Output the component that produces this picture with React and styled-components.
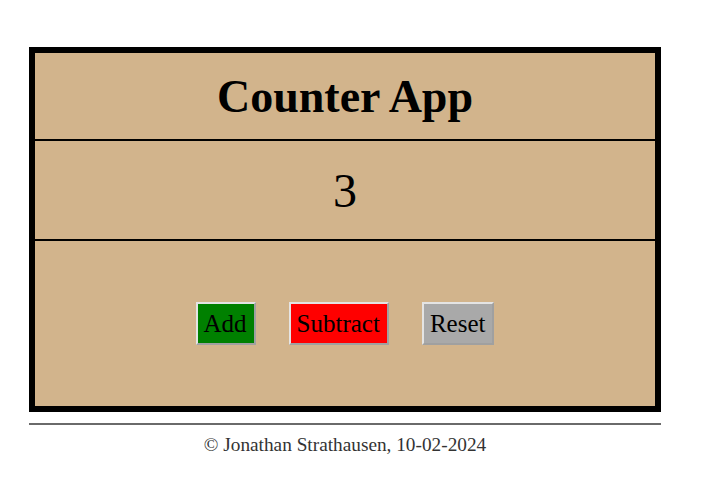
import React, { useState } from 'react';
import styled, { createGlobalStyle } from 'styled-components';

const GlobalStyle = createGlobalStyle`
    html, body {
        margin: 0;
        padding: 0;
        background: #fff;
        font-family: "Liberation Serif", "Times New Roman", serif;
    }
`

const Page = styled.div`
    width: 632px;
    padding: 47px 0 0 29px;
`

const Card = styled.div`
    border: 6px solid #000;
    background: #d2b48c;
    display: flex;
    flex-direction: column;
`

const Section = styled.div`
    display: flex;
    align-items: center;
    justify-content: center;
    height: ${props => props.height}px;
    border-bottom: ${props => props.divider ? '2px solid #000' : '0'};
`

const Title = styled.h1`
    margin: 0;
    font-size: 46px;
    font-weight: bold;
    color: #000;
`

const Count = styled.div`
    font-size: 48px;
    color: #000;
`

const ButtonRow = styled.div`
    display: flex;
    gap: 33px;
`

const Button = styled.button`
    font-family: "Liberation Serif", "Times New Roman", serif;
    font-size: 25px;
    line-height: 29px;
    padding: 5px 7px 5px 6px;
    color: #000;
    background: ${props => props.bg};
    border: 2px solid;
    border-color: #e4e4e4 #a0a0a0 #a0a0a0 #e4e4e4;
    cursor: pointer;
`

const Rule = styled.hr`
    margin: 11px 0 0;
    border: 0;
    border-top: 2px solid #6a6a6a;
`

const Footer = styled.footer`
    text-align: center;
    font-size: 19.3px;
    color: #333;
    padding-top: 9px;
`

const App = () => {
    const [count, setCount] = useState(3);

    return (
        <>
            <GlobalStyle/>
            <Page>
                <Card>
                    <Section height={86} divider>
                        <Title>Counter App</Title>
                    </Section>
                    <Section height={98} divider>
                        <Count>{count}</Count>
                    </Section>
                    <Section height={165}>
                        <ButtonRow>
                            <Button bg="#008000" onClick={() => setCount(count + 1)}>Add</Button>
                            <Button bg="#ff0000" onClick={() => setCount(count - 1)}>Subtract</Button>
                            <Button bg="#a9a9a9" onClick={() => setCount(0)}>Reset</Button>
                        </ButtonRow>
                    </Section>
                </Card>
                <Rule/>
                <Footer>&copy; Jonathan Strathausen, 10-02-2024</Footer>
            </Page>
        </>
    )
}

export default App;
